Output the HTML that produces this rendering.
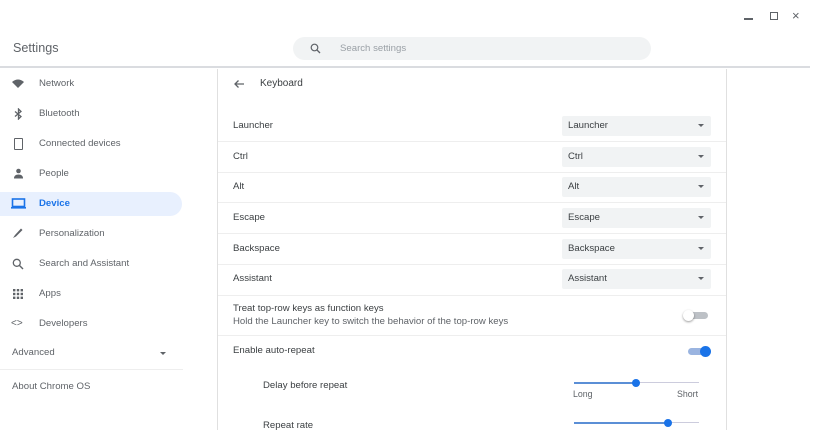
<!DOCTYPE html>
<html><head><meta charset="utf-8"><style>
*{margin:0;padding:0;box-sizing:border-box}
body{width:822px;height:430px;overflow:hidden;background:#fff;font-family:"Liberation Sans",sans-serif;color:#3c4043;position:relative;font-size:9.6px}
.a{position:absolute}
.hdr{left:0;top:0;width:810px;height:68px;border-bottom:2px solid #dadce0;background:#fff}
.title{left:13px;top:41px;font-size:12.6px;color:#5f6368}
.search{left:293px;top:37px;width:358px;height:23px;border-radius:12px;background:#f1f3f4}
.search span{position:absolute;left:47px;top:6px;color:#9aa0a6;font-size:9.6px}
.nav{left:11px;font-size:9.6px;color:#5f6368}
.hl{left:0;top:192px;width:182px;height:24px;background:#e8f0fe;border-radius:0 12px 12px 0}
.card{left:217px;top:69px;width:510px;height:361px;border-left:1px solid #e0e0e0;border-right:1px solid #e0e0e0}
.lab{left:233px;font-size:9.6px;color:#3c4043}
.sep{left:218px;width:508px;height:1px;background:#eee}
.dd{left:562px;width:149px;height:20px;background:#f1f3f4;border-radius:2px}
.dd span{position:absolute;left:6px;top:4px;font-size:9.6px;color:#3c4043}
.dd i{position:absolute;right:7px;top:8px;border-left:3.5px solid transparent;border-right:3.5px solid transparent;border-top:3.5px solid #5f6368}
</style></head><body>
<div class="a hdr"></div>
<div class="a" style="left:744px;top:18px;width:9px;height:1.5px;background:#5f6368"></div>
<div class="a" style="left:770px;top:12px;width:8px;height:8px;border:1.5px solid #5f6368"></div>
<div class="a" style="left:792px;top:8px;font-size:13px;color:#5f6368">×</div>
<div class="a title">Settings</div>
<div class="a search"><svg class="a" style="left:17px;top:6px" width="11" height="11" viewBox="0 0 11 11"><circle cx="4.5" cy="4.5" r="3.3" fill="none" stroke="#5f6368" stroke-width="1.2"/><path d="M7 7l3 3" stroke="#5f6368" stroke-width="1.3"/></svg><span>Search settings</span></div>

<div class="a hl"></div>
<svg class="a" style="left:12px;top:79px" width="12" height="10" viewBox="0 0 12 10"><path d="M0 3Q6 -2 12 3L6 9Z" fill="#5f6368"/></svg>
<div class="a nav" style="left:39px;top:78px">Network</div>
<svg class="a" style="left:14px;top:108px" width="9" height="12" viewBox="0 0 9 12"><path d="M1 3.5L7 8.5 4.5 11V1L7 3.5 1 8.5" fill="none" stroke="#5f6368" stroke-width="1.3"/></svg>
<div class="a nav" style="left:39px;top:108px">Bluetooth</div>
<div class="a" style="left:14px;top:138px;width:9px;height:12px;border:1.6px solid #5f6368;border-radius:1px"></div>
<div class="a nav" style="left:39px;top:138px">Connected devices</div>
<svg class="a" style="left:13px;top:168px" width="11" height="11" viewBox="0 0 11 11"><circle cx="5.5" cy="3" r="2.3" fill="#5f6368"/><path d="M1 10.5Q1 6.5 5.5 6.5T10 10.5Z" fill="#5f6368"/></svg>
<div class="a nav" style="left:39px;top:168px">People</div>
<svg class="a" style="left:11px;top:198px" width="15" height="11" viewBox="0 0 15 11"><rect x="1.5" y="1" width="12" height="7.5" fill="none" stroke="#1a73e8" stroke-width="1.6"/><rect x="0" y="9" width="15" height="1.6" fill="#1a73e8"/></svg>
<div class="a nav" style="left:39px;top:198px;color:#1a73e8;font-weight:bold">Device</div>
<svg class="a" style="left:12px;top:227px" width="12" height="12" viewBox="0 0 12 12"><path d="M1 11L3 8 9 1.5 10.5 3 4 9.5Z" fill="#5f6368"/></svg>
<div class="a nav" style="left:39px;top:228px">Personalization</div>
<svg class="a" style="left:12px;top:258px" width="12" height="12" viewBox="0 0 12 12"><circle cx="4.8" cy="4.8" r="3.5" fill="none" stroke="#5f6368" stroke-width="1.3"/><path d="M7.5 7.5l3.5 3.5" stroke="#5f6368" stroke-width="1.4"/></svg>
<div class="a nav" style="left:39px;top:258px">Search and Assistant</div>
<svg class="a" style="left:13px;top:289px" width="10" height="10" viewBox="0 0 10 10" fill="#5f6368"><rect x="0" y="0" width="2.4" height="2.4"/><rect x="3.8" y="0" width="2.4" height="2.4"/><rect x="7.6" y="0" width="2.4" height="2.4"/><rect x="0" y="3.8" width="2.4" height="2.4"/><rect x="3.8" y="3.8" width="2.4" height="2.4"/><rect x="7.6" y="3.8" width="2.4" height="2.4"/><rect x="0" y="7.6" width="2.4" height="2.4"/><rect x="3.8" y="7.6" width="2.4" height="2.4"/><rect x="7.6" y="7.6" width="2.4" height="2.4"/></svg>
<div class="a nav" style="left:39px;top:288px">Apps</div>
<div class="a nav" style="left:11px;top:318px;font-size:10px">&lt;&gt;</div>
<div class="a nav" style="left:39px;top:318px">Developers</div>
<div class="a nav" style="left:12px;top:347px">Advanced</div>
<div class="a" style="left:160px;top:352px;border-left:3.5px solid transparent;border-right:3.5px solid transparent;border-top:3.5px solid #5f6368"></div>
<div class="a" style="left:0;top:369px;width:183px;height:1px;background:#eee"></div>
<div class="a nav" style="left:12px;top:381px">About Chrome OS</div>

<div class="a card"></div>
<svg class="a" style="left:233px;top:79px" width="12" height="10" viewBox="0 0 12 10"><path d="M11 5H2M5.5 1.5L2 5l3.5 3.5" fill="none" stroke="#5f6368" stroke-width="1.3"/></svg>
<div class="a lab" style="left:260px;top:78px;font-size:10px">Keyboard</div>

<div class="a lab" style="top:120px">Launcher</div><div class="a dd" style="top:116px"><span>Launcher</span><i></i></div>
<div class="a sep" style="top:141px"></div>
<div class="a lab" style="top:151px">Ctrl</div><div class="a dd" style="top:147px"><span>Ctrl</span><i></i></div>
<div class="a sep" style="top:172px"></div>
<div class="a lab" style="top:181px">Alt</div><div class="a dd" style="top:177px"><span>Alt</span><i></i></div>
<div class="a sep" style="top:202px"></div>
<div class="a lab" style="top:212px">Escape</div><div class="a dd" style="top:208px"><span>Escape</span><i></i></div>
<div class="a sep" style="top:233px"></div>
<div class="a lab" style="top:243px">Backspace</div><div class="a dd" style="top:239px"><span>Backspace</span><i></i></div>
<div class="a sep" style="top:264px"></div>
<div class="a lab" style="top:273px">Assistant</div><div class="a dd" style="top:269px"><span>Assistant</span><i></i></div>
<div class="a sep" style="top:295px"></div>
<div class="a lab" style="top:303px">Treat top-row keys as function keys</div>
<div class="a lab" style="top:316px;color:#5f6368">Hold the Launcher key to switch the behavior of the top-row keys</div>
<div class="a" style="left:686px;top:312px;width:22px;height:7px;border-radius:4px;background:#bdc1c6"></div>
<div class="a" style="left:683px;top:310px;width:11px;height:11px;border-radius:50%;background:#fff;box-shadow:0 1px 2px rgba(0,0,0,.4)"></div>
<div class="a sep" style="top:335px"></div>
<div class="a lab" style="top:345px">Enable auto-repeat</div>
<div class="a" style="left:688px;top:348px;width:22px;height:7px;border-radius:4px;background:#9ab4e0"></div>
<div class="a" style="left:700px;top:346px;width:11px;height:11px;border-radius:50%;background:#1a73e8"></div>

<div class="a lab" style="left:263px;top:380px">Delay before repeat</div>
<div class="a" style="left:574px;top:382px;width:62px;height:2px;background:#5b8fd6"></div>
<div class="a" style="left:636px;top:382px;width:63px;height:1px;background:#ccd"></div>
<div class="a" style="left:632px;top:379px;width:8px;height:8px;border-radius:50%;background:#1a73e8"></div>
<div class="a lab" style="left:573px;top:389px;font-size:8.8px;color:#5f6368">Long</div>
<div class="a lab" style="left:677px;top:389px;font-size:8.8px;color:#5f6368">Short</div>
<div class="a lab" style="left:263px;top:420px">Repeat rate</div>
<div class="a" style="left:574px;top:422px;width:94px;height:2px;background:#5b8fd6"></div>
<div class="a" style="left:668px;top:422px;width:31px;height:1px;background:#ccd"></div>
<div class="a" style="left:664px;top:419px;width:8px;height:8px;border-radius:50%;background:#1a73e8"></div>
</body></html>
